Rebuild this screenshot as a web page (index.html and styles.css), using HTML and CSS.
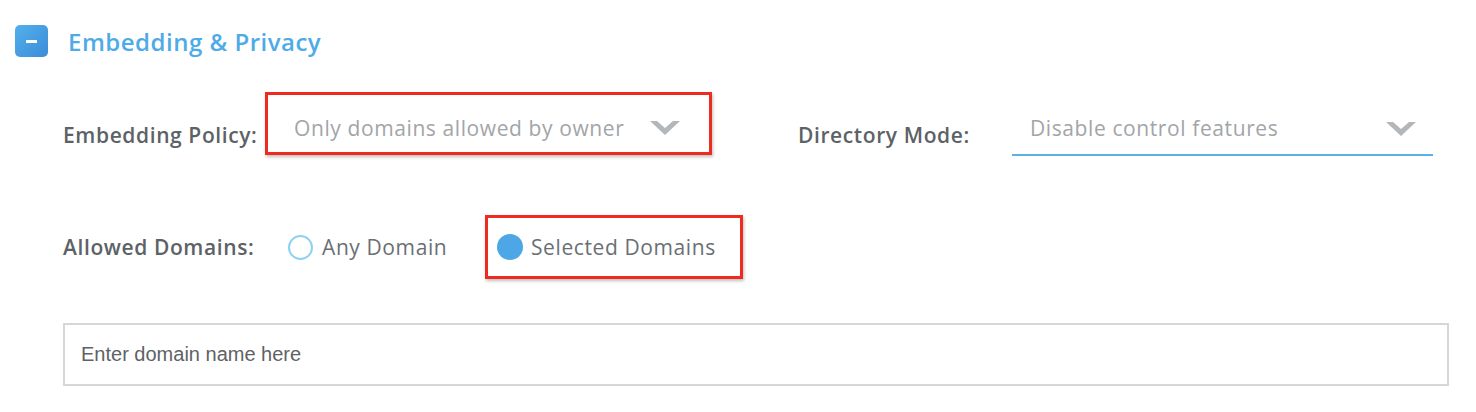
FILE: index.html
```html
<!DOCTYPE html>
<html lang="en">
	<head>
		<meta charset="utf-8" />
		<title>Embedding &amp; Privacy</title>
		<meta name="viewport" content="width=device-width, initial-scale=1.0">
		<link rel="stylesheet" href="styles.css">
	</head>
	<body>
		<div id="main">
			<div class="section-head">
				<span class="toggle"><span class="toggle-bar"></span></span>
				<h2>Embedding &amp; Privacy</h2>
			</div>

			<div class="row row-policy">
				<div class="label label-policy">Embedding Policy:</div>
				<div class="mark mark-policy">
					<div class="select select-boxed">
						<span class="select-text">Only domains allowed by owner</span>
						<svg class="chevron" width="30" height="15" viewBox="0 0 30 15"><polygon points="0,1 7,1 15,8 23,1 30,1 15,15" /></svg>
					</div>
				</div>
				<div class="label label-dir">Directory Mode:</div>
				<div class="select select-line">
					<span class="select-text">Disable control features</span>
					<svg class="chevron" width="30" height="15" viewBox="0 0 30 15"><polygon points="0,1 7,1 15,8 23,1 30,1 15,15" /></svg>
				</div>
			</div>

			<div class="row row-domains">
				<div class="label label-domains">Allowed Domains:</div>
				<div class="radio radio-any">
					<span class="dot"></span>
					<span class="radio-text">Any Domain</span>
				</div>
				<div class="mark mark-radio">
					<div class="radio">
						<span class="dot dot-on"></span>
						<span class="radio-text">Selected Domains</span>
					</div>
				</div>
			</div>

			<div class="domain-input">Enter domain name here</div>
		</div>
	</body>
</html>
```

FILE: styles.css
```css
body, html {
	margin:0;
	padding:0;
	background:#fff;
	font-family:"Open Sans", Lato, sans-serif;
}
#main {
	width:1476px;
	padding-top:25px;
}
.section-head {
	display:flex;
	align-items:center;
	padding-left:15px;
	height:32px;
}
.toggle {
	display:flex;
	align-items:center;
	justify-content:center;
	width:33px;
	height:32px;
	border-radius:5px;
	background:linear-gradient(135deg, #52b0ec, #3c8cd8);
}
.toggle-bar {
	width:11px;
	height:3px;
	background:#fff;
}
h2 {
	margin:0 0 0 20px;
	font-size:24px;
	font-weight:600;
	letter-spacing:0.5px;
	color:#4eabe7;
}
.row {
	display:flex;
	padding-left:63px;
}
.row-policy {
	margin-top:35px;
	height:63px;
}
.label {
	font-size:21px;
	font-weight:600;
	letter-spacing:0.6px;
	color:#5d6266;
	white-space:nowrap;
}
.label-policy {
	width:202px;
	margin-top:29px;
}
.label-dir {
	width:214px;
	margin-left:86px;
	margin-top:29px;
}
.mark {
	border:3px solid #ef2b20;
	box-shadow:1px 2px 3px rgba(0,0,0,0.25);
}
.mark-policy {
	width:441px;
	height:57px;
}
.select {
	display:flex;
	align-items:center;
	justify-content:space-between;
	box-sizing:border-box;
}
.select-text {
	font-size:21px;
	letter-spacing:0.6px;
	color:#a2a5a8;
	white-space:nowrap;
}
.chevron polygon {
	fill:#b4b7ba;
}
.select-boxed {
	height:57px;
	padding:8px 29px 0 26px;
}
.select-line {
	width:421px;
	height:42px;
	margin-top:22px;
	padding:0 17px 12px 18px;
	border-bottom:2px solid #5ab1e9;
}
.row-domains {
	margin-top:60px;
	height:64px;
	align-items:center;
}
.label-domains {
	width:225px;
}
.radio {
	display:flex;
	align-items:center;
}
.radio-any {
	width:197px;
}
.dot {
	box-sizing:border-box;
	width:25px;
	height:25px;
	border:2px solid #8fd0f3;
	border-radius:50%;
	margin-right:9px;
}
.dot-on {
	width:26px;
	height:26px;
	border:none;
	background:#4da6e6;
	margin-right:8px;
}
.radio-text {
	font-size:21px;
	letter-spacing:0.6px;
	color:#6a6f74;
	white-space:nowrap;
}
.mark-radio {
	display:flex;
	align-items:center;
	box-sizing:border-box;
	height:64px;
	width:258px;
	padding-left:9px;
}
.domain-input {
	box-sizing:border-box;
	margin:44px 0 0 63px;
	width:1386px;
	height:63px;
	border:2px solid #d6d6d6;
	padding:0 16px;
	display:flex;
	align-items:center;
	font-family:"Liberation Sans", Arial, sans-serif;
	font-size:20px;
	color:#5f6265;
}
```
